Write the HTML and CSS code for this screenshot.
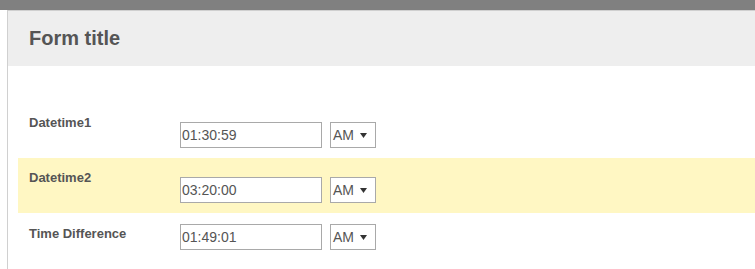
FILE: index.html
```html
<!DOCTYPE html>
<html>
<head>
<meta charset="utf-8">
<link rel="stylesheet" href="styles.css">
</head>
<body>
<div class="topbar"></div>
<div class="panel">
  <div class="header"><h1 class="title">Form title</h1></div>
  <div class="rows">
    <div class="row">
      <div class="label">Datetime1</div>
      <div class="controls">
        <input class="time" type="text" value="01:30:59">
        <div class="ampm"><span>AM</span><svg class="caret" width="7" height="5" viewBox="0 0 7 5"><path d="M0 0H7L3.5 5Z" fill="#333"/></svg></div>
      </div>
    </div>
    <div class="row row-hl">
      <div class="label">Datetime2</div>
      <div class="controls">
        <input class="time" type="text" value="03:20:00">
        <div class="ampm"><span>AM</span><svg class="caret" width="7" height="5" viewBox="0 0 7 5"><path d="M0 0H7L3.5 5Z" fill="#333"/></svg></div>
      </div>
    </div>
    <div class="row row-calc">
      <div class="label">Time Difference</div>
      <div class="controls">
        <input class="time" type="text" value="01:49:01">
        <div class="ampm"><span>AM</span><svg class="caret" width="7" height="5" viewBox="0 0 7 5"><path d="M0 0H7L3.5 5Z" fill="#333"/></svg></div>
      </div>
    </div>
  </div>
</div>
</body>
</html>
```
FILE: styles.css
```css
* { box-sizing: border-box; }
html, body { margin: 0; padding: 0; background: #fff; }
body {
  font-family: "Liberation Sans", Arial, sans-serif;
  color: #555;
  overflow: hidden;
  height: 269px;
}
.topbar {
  height: 10px;
  background: #808080;
}
.panel {
  margin-left: 7px;
  border-left: 1px solid #d0d0d0;
  border-top: 1px solid #cfcfcf;
  height: 259px;
}
.header {
  height: 55px;
  background: #eeeeee;
  padding: 16px 0 0 21px;
}
.title {
  margin: 0;
  font-size: 20px;
  line-height: 23px;
  font-weight: bold;
  color: #555;
}
.rows {
  padding: 37px 0 0 10px;
}
.row {
  display: flex;
  align-items: flex-start;
  height: 55px;
  padding-left: 11px;
}
.row-hl { background: #fff7c3; }
.label {
  width: 151px;
  flex: none;
  padding-top: 12px;
  font-size: 13px;
  line-height: 15px;
  font-weight: bold;
  color: #555;
}
.controls {
  display: flex;
  gap: 8px;
  margin-top: 19px;
}
.row-calc .label { padding-top: 13px; }
.row-calc .controls { margin-top: 11px; }
.time {
  width: 142px;
  height: 26px;
  margin: 0;
  padding: 0 1px;
  border: 1px solid #a9a9a9;
  border-radius: 0;
  background: #fff;
  font-family: "Liberation Sans", Arial, sans-serif;
  font-size: 14px;
  color: #555;
  outline: none;
}
.ampm {
  width: 46px;
  height: 26px;
  border: 1px solid #a9a9a9;
  background: #fff;
  display: flex;
  align-items: center;
  padding-left: 2px;
  font-size: 14px;
  color: #555;
}
.caret { margin-left: 6px; }
```
